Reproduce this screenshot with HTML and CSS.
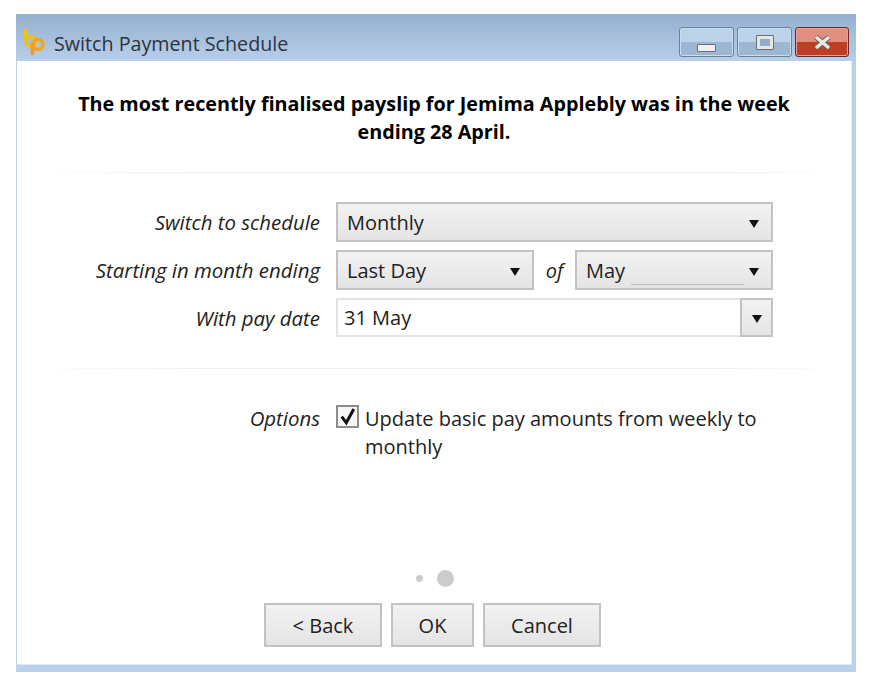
FILE: index.html
```html
<!DOCTYPE html>
<html lang="en">
    <head>
        <meta charset="utf-8">
        <title>Switch Payment Schedule</title>
        <link rel="stylesheet" href="styles.css">
    </head>
    <body>
        <div class="window">
            <div class="titlebar">
                <svg class="logo" width="24" height="28" viewBox="0 0 24 28">
                    <path d="M2 1.5 C4.5 3 3.5 9 4.5 14" fill="none" stroke="#f4c400" stroke-width="3.6"/>
                    <circle cx="9" cy="13.5" r="4.8" fill="none" stroke="#f5bd0c" stroke-width="3.4"/>
                    <circle cx="16" cy="16.5" r="5" fill="none" stroke="#f5a31c" stroke-width="3.4"/>
                    <path d="M10.5 15 V27" fill="none" stroke="#f59a1c" stroke-width="3.6"/>
                </svg>
                <span class="title">Switch Payment Schedule</span>
                <div class="caption-buttons">
                    <div class="caption-btn">
                        <span class="glyph-min"></span>
                    </div>
                    <div class="caption-btn">
                        <span class="glyph-max"></span>
                    </div>
                    <div class="caption-btn close">
                        <svg width="21" height="17" viewBox="0 0 21 17">
                            <path d="M4 3 L17 14 M17 3 L4 14" stroke="#6e5a58" stroke-width="5.4"/>
                            <path d="M4 3 L17 14 M17 3 L4 14" stroke="#e9e6e4" stroke-width="3.6"/>
                        </svg>
                    </div>
                </div>
            </div>
            <div class="content">
                <h1>The most recently finalised payslip for Jemima Applebly was in the week ending 28 April.</h1>
                <hr class="sep sep-top">
                <div class="form">
                    <label class="row-label">Switch to schedule</label>
                    <div class="select">
                        <span>Monthly</span>
                        <i class="arrow"></i>
                    </div>

                    <label class="row-label">Starting in month ending</label>
                    <div class="split">
                        <div class="select">
                            <span>Last Day</span>
                            <i class="arrow"></i>
                        </div>
                        <em class="of">of</em>
                        <div class="select select-month">
                            <span>May</span>
                            <span class="underline"></span>
                            <i class="arrow"></i>
                        </div>
                    </div>

                    <label class="row-label">With pay date</label>
                    <div class="combo">
                        <span class="combo-value">31 May</span>
                        <div class="combo-btn"><i class="arrow"></i></div>
                    </div>
                </div>
                <hr class="sep sep-bottom">
                <div class="options">
                    <label class="row-label">Options</label>
                    <div class="check-wrap">
                        <svg class="check" width="23" height="23" viewBox="0 0 23 23">
                            <rect x="1" y="1" width="21" height="21" fill="#f6f6f6" stroke="#8c8c8c" stroke-width="2"/>
                            <path d="M5.7 11.7 L10.3 17.8 L17.8 4" fill="none" stroke="#111" stroke-width="3"/>
                        </svg>
                        <span>Update basic pay amounts from weekly to monthly</span>
                    </div>
                </div>
                <div class="spacer"></div>
                <div class="dots">
                    <span class="dot"></span>
                    <span class="dot current"></span>
                </div>
                <div class="buttons">
                    <button class="btn btn-wide">&lt; Back</button>
                    <button class="btn btn-ok">OK</button>
                    <button class="btn btn-wide">Cancel</button>
                </div>
            </div>
        </div>
    </body>
</html>
```

FILE: styles.css
```css
html, body { height: 100%; }
body {
    background: #fff;
    color: #222;
    font-family: "Open Sans", "Noto Sans", sans-serif;
    font-size: 20px;
    margin: 0;
    padding: 14px 0 0 16px;
    box-sizing: border-box;
    overflow: hidden;
}
.window {
    width: 840px;
    height: 658px;
    display: flex;
    flex-direction: column;
    background: #b9d1ec;
}
.titlebar {
    height: 47px;
    box-sizing: border-box;
    flex: none;
    display: flex;
    align-items: center;
    background: linear-gradient(#95afcd, #b7cfea);
    padding: 12px 0 0 6px;
}
.logo { flex: none; margin-bottom: 4px; }
.title {
    margin-left: 8px;
    color: #2c3442;
    font-size: 19.7px;
}
.caption-buttons {
    display: flex;
    margin-left: auto;
    margin-right: 7px;
    gap: 3px;
    align-self: flex-start;
    margin-top: 1px;
}
.caption-btn {
    width: 55px;
    height: 30px;
    box-sizing: border-box;
    border: 1px solid #6d8098;
    border-radius: 3px;
    box-shadow: inset 0 0 0 1px #c9dcf0;
    background: linear-gradient(#bcd2ea 0 50%, #9db7d2 50% 100%);
    display: flex;
    align-items: center;
    justify-content: center;
}
.caption-btn.close {
    width: 54px;
    border-color: #6b2a2a;
    box-shadow: inset 0 0 0 1px #e8a096;
    background: linear-gradient(#e08e80 0 50%, #bd4025 50% 100%);
}
.glyph-min {
    width: 19px;
    height: 8px;
    margin-top: 11px;
    box-sizing: border-box;
    background: #f0f0f0;
    border: 1px solid #66707c;
    border-radius: 1px;
}
.glyph-max {
    width: 18px;
    height: 15px;
    box-sizing: border-box;
    background: #93a9c4;
    border: 1px solid #66707c;
    border-radius: 1px;
    box-shadow: inset 0 0 0 3px #e6e6e6;
}
.content {
    flex: none;
    height: 604px;
    margin: 0 4px 0 1px;
    background: #fff;
    border-right: 1px solid #e8eef5;
    border-bottom: 1px solid #e8e8e8;
    box-sizing: border-box;
    display: flex;
    flex-direction: column;
}
h1 {
    font-size: 19.75px;
    font-weight: 700;
    line-height: 28px;
    color: #000;
    text-align: center;
    margin: 29px 50px 0 50px;
}
.sep {
    border: 0;
    height: 1px;
    margin: 0 10px 0 6px;
    background: linear-gradient(to right, #fff, #eee 22%, #eee 85%, #fff);
}
.sep-top { margin-top: 26px; }
.sep-bottom { margin-top: 31px; }
.form {
    display: grid;
    grid-template-columns: 303px 437px;
    column-gap: 16px;
    grid-template-rows: 40px 40px 39px;
    row-gap: 8px;
    margin-top: 29px;
    align-items: center;
}
.row-label {
    font-style: italic;
    font-size: 20.4px;
    text-align: right;
    white-space: nowrap;
}
.select {
    height: 40px;
    box-sizing: border-box;
    border: 2px solid #c2c2c2;
    background: linear-gradient(#f2f2f2, #e4e4e4);
    display: flex;
    align-items: center;
    justify-content: space-between;
    padding: 0 12px 0 9px;
}
.split {
    display: grid;
    grid-template-columns: 198px 1fr 198px;
    align-items: center;
}
.of { text-align: center; }
.underline {
    flex: 1;
    align-self: flex-end;
    height: 1px;
    background: #bdbdbd;
    margin: 0 0 3px 6px;
}
.select-month .arrow { margin-left: 5px; }
.arrow {
    display: block;
    width: 0;
    height: 0;
    flex: none;
    border-left: 5px solid transparent;
    border-right: 5px solid transparent;
    border-top: 8px solid #111;
    margin-top: 3px;
}
.combo {
    height: 39px;
    box-sizing: border-box;
    border: 2px solid #e4e4e4;
    display: flex;
    align-items: center;
    justify-content: space-between;
    padding-left: 6px;
}
.combo-btn {
    width: 33px;
    height: 39px;
    margin: -2px -2px -2px 0;
    box-sizing: border-box;
    border: 2px solid #c2c2c2;
    background: linear-gradient(#f2f2f2, #e4e4e4);
    display: flex;
    align-items: center;
    justify-content: center;
}
.options {
    display: grid;
    grid-template-columns: 303px 437px;
    column-gap: 16px;
    margin-top: 36px;
}
.options .row-label { line-height: 26px; }
.check-wrap {
    display: flex;
    gap: 6px;
    line-height: 28px;
}
.check { flex: none; }
.spacer { flex: 1; }
.dots {
    display: flex;
    justify-content: center;
    align-items: center;
    gap: 14px;
    margin-left: 2px;
}
.dot {
    width: 7px;
    height: 7px;
    border-radius: 50%;
    background: #ccc;
}
.dot.current {
    width: 17px;
    height: 17px;
}
.buttons {
    display: flex;
    justify-content: center;
    gap: 9px;
    margin: 16px 0 17px;
    padding-right: 3px;
}
.btn {
    height: 44px;
    box-sizing: border-box;
    border: 2px solid #c2c2c2;
    background: linear-gradient(#f2f2f2, #e4e4e4);
    color: #222;
    font: inherit;
    padding: 0;
}
.btn-wide { width: 118px; }
.btn-ok { width: 83px; }
```
